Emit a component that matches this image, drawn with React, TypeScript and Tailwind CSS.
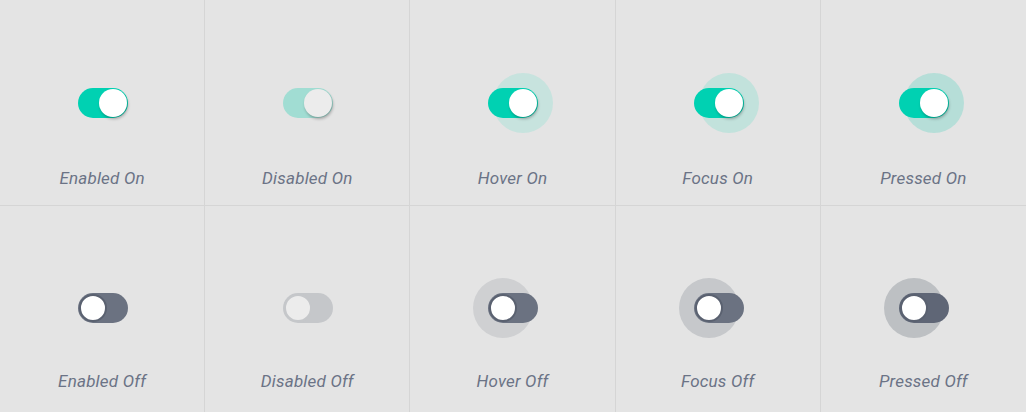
import React from 'react';

type State = 'enabled' | 'disabled' | 'hover' | 'focus' | 'pressed';

const STATES: { key: State; label: string }[] = [
  { key: 'enabled', label: 'Enabled' },
  { key: 'disabled', label: 'Disabled' },
  { key: 'hover', label: 'Hover' },
  { key: 'focus', label: 'Focus' },
  { key: 'pressed', label: 'Pressed' },
];

const haloOn: Record<State, string> = {
  enabled: '',
  disabled: '',
  hover: 'bg-[#c7e3de]',
  focus: 'bg-[#c2e2dc]',
  pressed: 'bg-[#b6ded8]',
};

const haloOff: Record<State, string> = {
  enabled: '',
  disabled: '',
  hover: 'bg-[#cfd0d2]',
  focus: 'bg-[#c6c8cb]',
  pressed: 'bg-[#bdc0c3]',
};

const Toggle: React.FC<{ on: boolean; state: State }> = ({ on, state }) => {
  const disabled = state === 'disabled';
  const halo = on ? haloOn[state] : haloOff[state];

  const trackColor = on
    ? disabled
      ? 'bg-[#a1ddd3]'
      : 'bg-[#00d1b2]'
    : disabled
      ? 'bg-[#c5c7ca]'
      : state === 'pressed'
        ? 'bg-[#5f6676]'
        : 'bg-[#6b7281]';

  const knobColor = disabled ? 'bg-[#ececec]' : 'bg-white';

  return (
    <div className="relative w-[50px] h-[30px]">
      {halo && (
        <div
          className={`absolute top-[-15px] w-[60px] h-[60px] rounded-full ${halo} ${
            on ? 'left-[5px]' : 'left-[-15px]'
          }`}
        />
      )}
      <div
        className={`relative w-[50px] h-[30px] rounded-full flex items-center px-px ${trackColor} ${
          on ? 'justify-end' : 'justify-start'
        }`}
      >
        <div
          className={`w-[28px] h-[28px] rounded-full ${knobColor} ${
            on
              ? 'shadow-[1px_2px_3px_rgba(0,0,0,0.28)]'
              : disabled
                ? 'border-2 border-[#c5c7ca]'
                : 'border-2 border-[#5a6170]'
          }`}
        />
      </div>
    </div>
  );
};

export default function App() {
  return (
    <div className="w-[1026px] h-[412px] bg-[#e4e4e4] grid grid-cols-5 grid-rows-2 font-['Roboto',sans-serif] overflow-hidden">
      {[true, false].map((on) =>
        STATES.map((s, i) => (
          <div
            key={`${on}-${s.key}`}
            className={`flex flex-col items-center border-[#d5d5d5] ${i < 4 ? 'border-r' : ''} ${
              on ? 'border-b pt-[88px]' : 'pt-[87px]'
            }`}
          >
            <div className="pl-[2px]">
              <Toggle on={on} state={s.key} />
            </div>
            <span
              className={`italic text-[17px] leading-6 tracking-[0.2px] text-[#6b7386] ${
                on ? 'mt-[48px]' : 'mt-[46px]'
              }`}
            >
              {s.label} {on ? 'On' : 'Off'}
            </span>
          </div>
        ))
      )}
    </div>
  );
}
